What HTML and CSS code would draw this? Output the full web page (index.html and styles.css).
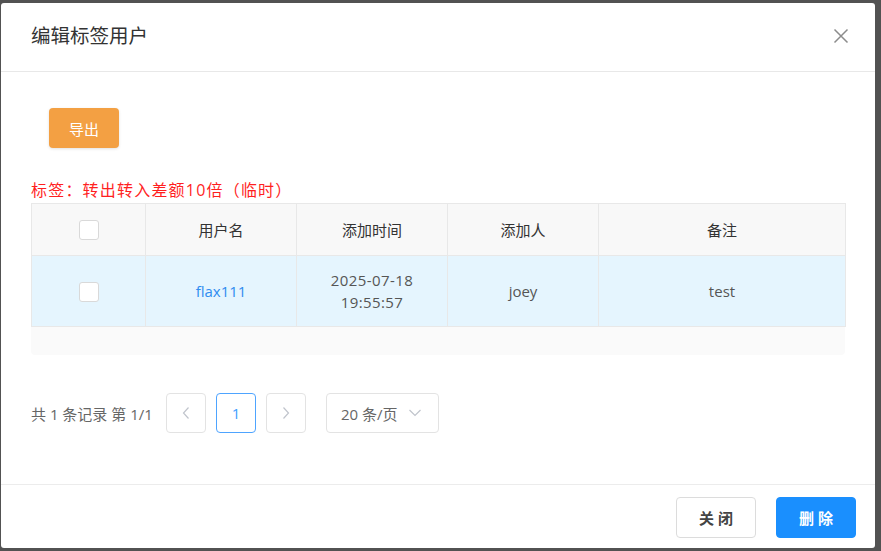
FILE: index.html
```html
<!DOCTYPE html>
<html lang="zh-CN">
<head>
<meta charset="utf-8">
<title>编辑标签用户</title>
<link rel="stylesheet" href="styles.css">
</head>
<body>
<div class="dialog">
  <div class="dialog-header">
    <span class="dialog-title">编辑标签用户</span>
    <span class="close-btn">
      <svg width="16" height="16" viewBox="0 0 16 16"><path d="M1.5 1.5L14.5 14.5M14.5 1.5L1.5 14.5" stroke="#8c8c8c" stroke-width="1.5" fill="none"/></svg>
    </span>
  </div>
  <div class="dialog-body">
    <div class="toolbar">
      <button class="btn-export">导出</button>
    </div>
    <div class="tag-label">标签：转出转入差额10倍（临时）</div>
    <div class="table-wrap">
      <table class="grid">
        <colgroup>
          <col class="c1"><col class="c2"><col class="c3"><col class="c4"><col class="c5">
        </colgroup>
        <thead>
          <tr>
            <th><span class="checkbox"></span></th>
            <th>用户名</th>
            <th>添加时间</th>
            <th>添加人</th>
            <th>备注</th>
          </tr>
        </thead>
        <tbody>
          <tr>
            <td><span class="checkbox"></span></td>
            <td class="link">flax111</td>
            <td class="date">2025-07-18<br>19:55:57</td>
            <td>joey</td>
            <td>test</td>
          </tr>
        </tbody>
      </table>
      <div class="scroll-area"></div>
    </div>
    <div class="pager">
      <span class="pager-total">共 1 条记录 第 1/1</span>
      <span class="pg-btn">
        <svg width="10" height="14" viewBox="0 0 10 14"><path d="M7.5 1.5L2.5 7L7.5 12.5" stroke="#c0c4cc" stroke-width="1.2" fill="none"/></svg>
      </span>
      <span class="pg-btn active">1</span>
      <span class="pg-btn">
        <svg width="10" height="14" viewBox="0 0 10 14"><path d="M2.5 1.5L7.5 7L2.5 12.5" stroke="#c0c4cc" stroke-width="1.2" fill="none"/></svg>
      </span>
      <span class="pg-size">20 条/页
        <svg width="14" height="10" viewBox="0 0 14 10"><path d="M1.5 2L7 7.5L12.5 2" stroke="#c0c4cc" stroke-width="1.2" fill="none"/></svg>
      </span>
    </div>
  </div>
  <div class="dialog-footer">
    <button class="btn btn-default">关 闭</button>
    <button class="btn btn-primary">删 除</button>
  </div>
</div>
</body>
</html>
```

FILE: styles.css
```css
* { box-sizing: border-box; }
html, body { margin: 0; padding: 0; }
body {
  background: #525252;
  width: 881px;
  height: 551px;
  overflow: hidden;
  font-family: "Open Sans", "Noto Sans CJK SC", sans-serif;
  font-size: 15px;
  color: #333;
}
.dialog {
  margin: 3px 0 0 1px;
  width: 874px;
  height: 545px;
  background: #fff;
  border-radius: 3px;
  display: flex;
  flex-direction: column;
}
.dialog-header {
  height: 69px;
  border-bottom: 1px solid #e8e8e8;
  display: flex;
  align-items: center;
  justify-content: space-between;
  padding: 0 26px 0 30px;
}
.dialog-title {
  font-size: 19.5px;
  color: #333;
  line-height: 26px;
  margin-top: -2px;
}
.close-btn { display: flex; width: 16px; height: 16px; margin-top: -2px; }
.dialog-body {
  flex: 1;
  padding: 36px 30px 0 30px;
}
.toolbar { padding-left: 18px; }
.btn-export {
  width: 70px;
  height: 40px;
  border: none;
  border-radius: 4px;
  background: #f3a043;
  color: #fff;
  font-family: inherit;
  font-size: 15px;
  box-shadow: 0 1px 3px rgba(0,0,0,0.12);
  padding: 0;
}
.tag-label {
  margin-top: 31px;
  color: #ff1f1f;
  font-size: 16px;
  letter-spacing: 1.2px;
  line-height: 22px;
  height: 24px;
}
.table-wrap { width: 814px; }
.grid {
  width: 814px;
  border-collapse: collapse;
  table-layout: fixed;
}
.c1 { width: 114px; }
.c2, .c3, .c4 { width: 151px; }
.c5 { width: 247px; }
.grid th, .grid td {
  border: 1px solid #e8e8e8;
  text-align: center;
  vertical-align: middle;
}
.grid th {
  background: #f8f8f8;
  height: 52px;
  font-weight: normal;
  color: #333;
  font-size: 15px;
}
.grid td {
  background: #e5f5fe;
  height: 71px;
  color: #555;
  font-size: 15px;
  line-height: 22px;
}
.grid td.date { letter-spacing: 0.4px; }
.grid td.link { color: #2f8cf0; }
.checkbox {
  display: inline-block;
  width: 20px;
  height: 20px;
  border: 1px solid #d9d9d9;
  border-radius: 3px;
  background: #fff;
  vertical-align: middle;
}
.scroll-area {
  height: 28px;
  background: #fafafa;
  border-radius: 0 0 4px 4px;
}
.pager {
  margin-top: 38px;
  display: flex;
  align-items: center;
  height: 40px;
}
.pager-total {
  color: #666;
  font-size: 15px;
  width: 135px;
  white-space: nowrap;
}
.pg-btn {
  width: 40px;
  height: 40px;
  border: 1px solid #e3e3e3;
  border-radius: 4px;
  display: flex;
  align-items: center;
  justify-content: center;
  margin-right: 10px;
  color: #409eff;
  font-size: 15px;
}
.pg-btn.active { border-color: #4ea4ff; }
.pg-size {
  margin-left: 10px;
  width: 113px;
  height: 40px;
  border: 1px solid #e3e3e3;
  border-radius: 4px;
  display: flex;
  align-items: center;
  padding-left: 14px;
  gap: 10px;
  color: #666;
  font-size: 15px;
}
.dialog-footer {
  height: 64px;
  border-top: 1px solid #ececec;
  display: flex;
  justify-content: flex-end;
  align-items: flex-start;
  padding: 12px 19px 0 0;
  gap: 20px;
}
.btn {
  width: 80px;
  height: 41px;
  border-radius: 4px;
  font-family: inherit;
  font-size: 15px;
  font-weight: bold;
  padding: 0;
}
.btn-default {
  background: #fff;
  border: 1px solid #dcdcdc;
  color: #444;
}
.btn-primary {
  background: #1a8ffe;
  border: 1px solid #1a8ffe;
  color: #fff;
}
```
